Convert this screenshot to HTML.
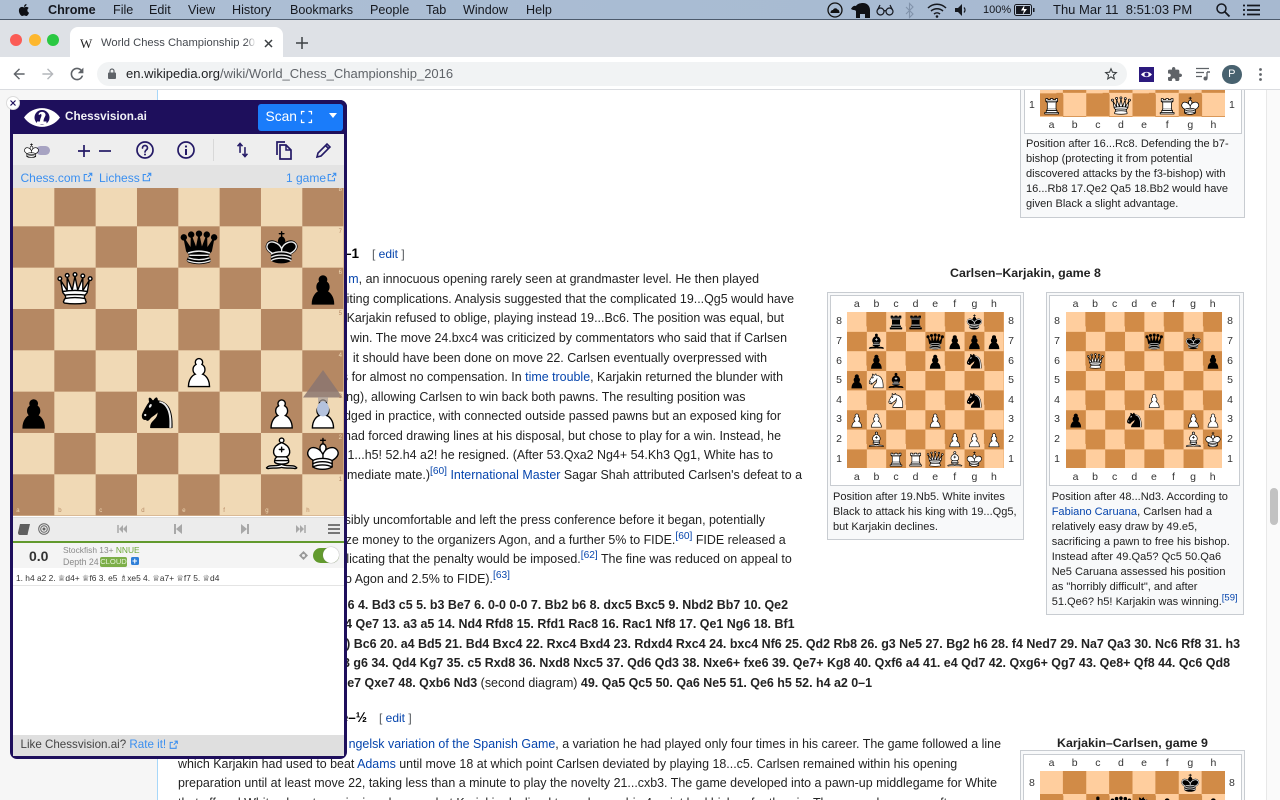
<!DOCTYPE html>
<html lang="en">
<head>
<meta charset="utf-8">
<title>World Chess Championship 2016</title>
<style>
html,body{margin:0;padding:0;width:1280px;height:800px;overflow:hidden;background:#fff;font-family:"Liberation Sans",Arial,sans-serif;color:#222}
#w{position:absolute;left:0;top:0;width:1280px;height:800px;overflow:hidden;background:#fff;filter:blur(.3px)}
.a{position:absolute}
.t{position:absolute;white-space:nowrap;line-height:16px}
.p{font-size:12.45px;color:#222}
.p a,.c a{color:#0645ad;text-decoration:none}
.p sup{font-size:10.2px;line-height:0;color:#0645ad}
.b{font-weight:bold}
.b span{font-weight:normal}
.c{font-size:11.05px;color:#222}
.m{font-size:12.6px;color:#15181f;line-height:20px;top:0}
.fl{position:absolute;display:flex;font-size:10.5px;color:#333;line-height:14px;text-align:center}
.fl i{font-style:normal;flex:1}
.col{flex-direction:column;width:14px}
.col i{display:flex;align-items:center;justify-content:center}
.wb{position:absolute;background:repeating-conic-gradient(#d18b47 0 25%,#ffce9e 0 50%)}
.cap{position:absolute;background:#f8f9fa;border:1px solid #c8ccd1;box-sizing:border-box}
.inner{position:absolute;background:#fff;border:1px solid #c8ccd1;box-sizing:border-box}
.nv{fill:none;stroke:#241a66;stroke-width:2;stroke-linecap:round;stroke-linejoin:round}
.lk{color:#3a8ff0;font-size:12px}
svg{position:absolute;overflow:visible}
.co{position:absolute;font-size:6px;line-height:7px}
</style>
</head>
<body>
<div id="w">
<svg width="0" height="0" style="position:absolute">
<defs>
<symbol id="wp" viewBox="0 0 45 45"><path d="M22.5 9c-2.21 0-4 1.79-4 4 0 .89.29 1.71.78 2.38C17.33 16.5 16 18.59 16 21c0 2.03.94 3.84 2.41 5.03-3 1.06-7.41 5.55-7.41 13.47h23c0-7.92-4.41-12.41-7.41-13.47 1.47-1.19 2.41-3 2.41-5.03 0-2.41-1.33-4.5-3.28-5.62.49-.67.78-1.49.78-2.38 0-2.21-1.79-4-4-4z" fill="#fff" stroke="#000" stroke-width="1.5" stroke-linecap="round"/></symbol>
<symbol id="bp" viewBox="0 0 45 45"><path d="M22.5 9c-2.21 0-4 1.79-4 4 0 .89.29 1.71.78 2.38C17.33 16.5 16 18.59 16 21c0 2.03.94 3.84 2.41 5.03-3 1.06-7.41 5.55-7.41 13.47h23c0-7.92-4.41-12.41-7.41-13.47 1.47-1.19 2.41-3 2.41-5.03 0-2.41-1.33-4.5-3.28-5.62.49-.67.78-1.49.78-2.38 0-2.21-1.79-4-4-4z" fill="#000" stroke="#000" stroke-width="1.5" stroke-linecap="round"/></symbol>
<symbol id="wn" viewBox="0 0 45 45"><g fill="none" fill-rule="evenodd" stroke="#000" stroke-width="1.5" stroke-linecap="round" stroke-linejoin="round"><path d="M22 10c10.5 1 16.5 8 16 29H15c0-9 10-6.5 8-21" fill="#fff"/><path d="M24 18c.38 2.91-5.55 7.37-8 9-3 2-2.82 4.34-5 4-1.042-.94 1.41-3.04 0-3-1 0 .19 1.23-1 2-1 0-4.003 1-4-4 0-2 6-12 6-12s1.89-1.9 2-3.5c-.73-.994-.5-2-.5-3 1-1 3 2.5 3 2.5h2s.78-1.992 2.5-3c1 0 1 3 1 3" fill="#fff"/><path d="M9.5 25.5a.5.5 0 1 1-1 0 .5.5 0 1 1 1 0zm5.433-9.75a.5 1.5 30 1 1-.866-.5.5 1.5 30 1 1 .866.5z" fill="#000"/></g></symbol>
<symbol id="bn" viewBox="0 0 45 45"><g fill="none" fill-rule="evenodd" stroke="#000" stroke-width="1.5" stroke-linecap="round" stroke-linejoin="round"><path d="M22 10c10.5 1 16.5 8 16 29H15c0-9 10-6.5 8-21" fill="#000"/><path d="M24 18c.38 2.91-5.55 7.37-8 9-3 2-2.82 4.34-5 4-1.042-.94 1.41-3.04 0-3-1 0 .19 1.23-1 2-1 0-4.003 1-4-4 0-2 6-12 6-12s1.89-1.9 2-3.5c-.73-.994-.5-2-.5-3 1-1 3 2.5 3 2.5h2s.78-1.992 2.5-3c1 0 1 3 1 3" fill="#000"/><path d="M9.5 25.5a.5.5 0 1 1-1 0 .5.5 0 1 1 1 0zm5.433-9.75a.5 1.5 30 1 1-.866-.5.5 1.5 30 1 1 .866.5z" fill="#ececec" stroke="#ececec"/><path d="M24.55 10.4l-.45 1.45.5.15c3.15 1 5.65 2.49 7.9 6.75S35.75 29.06 35.25 39l-.05.5h2.25l.05-.5c.5-10.06-.88-16.85-3.25-21.34-2.37-4.49-5.79-6.64-9.19-7.16l-.51-.1z" fill="#ececec" stroke="none"/></g></symbol>
<symbol id="wb" viewBox="0 0 45 45"><g fill="none" fill-rule="evenodd" stroke="#000" stroke-width="1.5" stroke-linecap="round" stroke-linejoin="round"><g fill="#fff"><path d="M9 36c3.39-.97 10.11.43 13.5-2 3.39 2.43 10.11 1.03 13.5 2 0 0 1.65.54 3 2-.68.97-1.65.99-3 .5-3.39-.97-10.11.46-13.5-1-3.39 1.46-10.11.03-13.5 1-1.35.49-2.32.47-3-.5 1.35-1.46 3-2 3-2z"/><path d="M15 32c2.5 2.5 12.5 2.5 15 0 .5-1.5 0-2 0-2 0-2.5-2.5-4-2.5-4 5.5-1.5 6-11.5-5-15.5-11 4-10.5 14-5 15.5 0 0-2.5 1.5-2.5 4 0 0-.5.5 0 2z"/><path d="M25 8a2.5 2.5 0 1 1-5 0 2.5 2.5 0 1 1 5 0z"/></g><path d="M17.5 26h10M15 30h15m-7.5-14.5v5M20 18h5"/></g></symbol>
<symbol id="bb" viewBox="0 0 45 45"><g fill="none" fill-rule="evenodd" stroke="#000" stroke-width="1.5" stroke-linecap="round" stroke-linejoin="round"><g fill="#000"><path d="M9 36c3.39-.97 10.11.43 13.5-2 3.39 2.43 10.11 1.03 13.5 2 0 0 1.65.54 3 2-.68.97-1.65.99-3 .5-3.39-.97-10.11.46-13.5-1-3.39 1.46-10.11.03-13.5 1-1.35.49-2.32.47-3-.5 1.35-1.46 3-2 3-2z"/><path d="M15 32c2.5 2.5 12.5 2.5 15 0 .5-1.5 0-2 0-2 0-2.5-2.5-4-2.5-4 5.5-1.5 6-11.5-5-15.5-11 4-10.5 14-5 15.5 0 0-2.5 1.5-2.5 4 0 0-.5.5 0 2z"/><path d="M25 8a2.5 2.5 0 1 1-5 0 2.5 2.5 0 1 1 5 0z"/></g><path d="M17.5 26h10M15 30h15m-7.5-14.5v5M20 18h5" stroke="#ececec"/></g></symbol>
<symbol id="wr" viewBox="0 0 45 45"><g fill="#fff" fill-rule="evenodd" stroke="#000" stroke-width="1.5" stroke-linecap="round" stroke-linejoin="round"><path d="M9 39h27v-3H9v3zM12 36v-4h21v4H12zM11 14V9h4v2h5V9h5v2h5V9h4v5"/><path d="M34 14l-3 3H14l-3-3"/><path d="M31 17v12.5H14V17"/><path d="M31 29.5l1.5 2.5h-20l1.5-2.5"/><path d="M11 14h23" fill="none"/></g></symbol>
<symbol id="br" viewBox="0 0 45 45"><g fill="#000" fill-rule="evenodd" stroke="#000" stroke-width="1.5" stroke-linecap="round" stroke-linejoin="round"><path d="M9 39h27v-3H9v3zM12.5 32l1.5-2.5h17l1.5 2.5h-20zM12 36v-4h21v4H12z"/><path d="M14 29.5v-13h17v13H14z"/><path d="M14 16.5L11 14h23l-3 2.5H14zM11 14V9h4v2h5V9h5v2h5V9h4v5H11z"/><path d="M12 35.5h21M13 31.5h19M14 29.5h17M14 16.5h17M11 14h23" fill="none" stroke="#ececec" stroke-width="1"/></g></symbol>
<symbol id="wq" viewBox="0 0 45 45"><g fill="#fff" fill-rule="evenodd" stroke="#000" stroke-width="1.5" stroke-linecap="round" stroke-linejoin="round"><path d="M8 12a2 2 0 1 1-4 0 2 2 0 1 1 4 0zM24.5 7.5a2 2 0 1 1-4 0 2 2 0 1 1 4 0zM41 12a2 2 0 1 1-4 0 2 2 0 1 1 4 0zM16 8.5a2 2 0 1 1-4 0 2 2 0 1 1 4 0zM33 9a2 2 0 1 1-4 0 2 2 0 1 1 4 0z"/><path d="M9 26c8.5-1.5 21-1.5 27 0l2-12-7 11V11l-5.5 13.5-3-15-3 15-5.5-14V25L7 14l2 12z"/><path d="M9 26c0 2 1.5 2 2.5 4 1 1.5 1 1 .5 3.5-1.5 1-1.5 2.5-1.5 2.5-1.5 1.5.5 2.5.5 2.5 6.5 1 16.5 1 23 0 0 0 1.5-1 0-2.5 0 0 .5-1.5-1-2.5-.5-2.5-.5-2 .5-3.5 1-2 2.5-2 2.5-4-8.5-1.5-18.5-1.5-27 0z"/><path d="M11.5 30c3.5-1 18.5-1 22 0M12 33.5c6-1 15-1 21 0" fill="none"/></g></symbol>
<symbol id="bq" viewBox="0 0 45 45"><g fill="#000" fill-rule="evenodd" stroke="#000" stroke-width="1.5" stroke-linecap="round" stroke-linejoin="round"><circle cx="6" cy="12" r="2.75"/><circle cx="14" cy="9" r="2.75"/><circle cx="22.5" cy="8" r="2.75"/><circle cx="31" cy="9" r="2.75"/><circle cx="39" cy="12" r="2.75"/><path d="M9 26c8.5-1.5 21-1.5 27 0l2.5-12.5L31 25l-.3-14.1-5.2 13.6-3-14.5-3 14.5-5.2-13.6L14 25 6.5 13.5 9 26z"/><path d="M9 26c0 2 1.5 2 2.5 4 1 1.5 1 1 .5 3.5-1.5 1-1.5 2.5-1.5 2.5-1.5 1.5.5 2.5.5 2.5 6.5 1 16.5 1 23 0 0 0 1.5-1 0-2.5 0 0 .5-1.5-1-2.5-.5-2.5-.5-2 .5-3.5 1-2 2.5-2 2.5-4-8.5-1.5-18.5-1.5-27 0z"/><path d="M11 38.5a35 35 1 0 0 23 0" fill="none"/><path d="M11 29a35 35 1 0 1 23 0M12.5 31.5h20M11.5 34.5a35 35 1 0 0 22 0M10.5 37.5a35 35 1 0 0 24 0" fill="none" stroke="#ececec"/></g></symbol>
<symbol id="wk" viewBox="0 0 45 45"><g fill="none" fill-rule="evenodd" stroke="#000" stroke-width="1.5" stroke-linecap="round" stroke-linejoin="round"><path d="M22.5 11.63V6M20 8h5"/><path d="M22.5 25s4.5-7.5 3-10.5c0 0-1-2.5-3-2.5s-3 2.5-3 2.5c-1.5 3 3 10.5 3 10.5" fill="#fff"/><path d="M11.5 37c5.5 3.5 15.5 3.5 21 0v-7s9-4.5 6-10.5c-4-6.5-13.5-3.5-16 4V27v-3.5c-3.5-7.5-13-10.5-16-4-3 6 5 10 5 10V37z" fill="#fff"/><path d="M11.5 30c5.5-3 15.5-3 21 0m-21 3.5c5.5-3 15.5-3 21 0m-21 3.5c5.5-3 15.5-3 21 0"/></g></symbol>
<symbol id="bk" viewBox="0 0 45 45"><g fill="none" fill-rule="evenodd" stroke="#000" stroke-width="1.5" stroke-linecap="round" stroke-linejoin="round"><path d="M22.5 11.63V6M20 8h5"/><path d="M22.5 25s4.5-7.5 3-10.5c0 0-1-2.5-3-2.5s-3 2.5-3 2.5c-1.5 3 3 10.5 3 10.5" fill="#000"/><path d="M11.5 37c5.5 3.5 15.5 3.5 21 0v-7s9-4.5 6-10.5c-4-6.5-13.5-3.5-16 4V27v-3.5c-3.5-7.5-13-10.5-16-4-3 6 5 10 5 10V37z" fill="#000"/><path d="M32 29.5s8.5-4 6.03-9.65C34.15 14 25 18 22.5 24.5l.01 2.1-.01-2.1C20 18 9.906 14 6.997 19.85c-2.497 5.65 4.853 9 4.853 9" stroke="#ececec"/><path d="M11.5 30c5.5-3 15.5-3 21 0m-21 3.5c5.5-3 15.5-3 21 0m-21 3.5c5.5-3 15.5-3 21 0" stroke="#ececec"/></g></symbol>
<symbol id="ext" viewBox="0 0 24 24"><path d="M14 3h7v7M21 3l-9 9M18 14v7H3V6h7" fill="none" stroke="currentColor" stroke-width="2.6"/></symbol>
</defs>
</svg>

<!-- page background -->
<div class="a" style="left:0;top:90px;width:157px;height:710px;background:#f6f6f6"></div>
<div class="a" style="left:157px;top:90px;width:1px;height:710px;background:#a7d7f9"></div>

<!-- article -->
<div class="t b p" style="right:921px;top:246px;font-size:13.5px;color:#000">–1</div>
<div class="t" style="left:372px;top:246px;font-size:12px;color:#54595d">[ <a style="color:#0645ad">edit</a> ]</div>

<div class="t p" style="right:521px;top:271.3px"><a>m</a>, an innocuous opening rarely seen at grandmaster level. He then played</div>
<div class="t p" style="right:486px;top:290.9px">iting complications. Analysis suggested that the complicated 19...Qg5 would have</div>
<div class="t p" style="right:496px;top:310.4px">Karjakin refused to oblige, playing instead 19...Bc6. The position was equal, but</div>
<div class="t p" style="right:493px;top:330px">win. The move 24.bxc4 was criticized by commentators who said that if Carlsen</div>
<div class="t p" style="right:513px;top:349.5px">it should have been done on move 22. Carlsen eventually overpressed with</div>
<div class="t p" style="right:497px;top:369.1px">s for almost no compensation. In <a>time trouble</a>, Karjakin returned the blunder with</div>
<div class="t p" style="right:534.5px;top:388.6px">ng), allowing Carlsen to win back both pawns. The resulting position was</div>
<div class="t p" style="right:499px;top:408.2px">dged in practice, with connected outside passed pawns but an exposed king for</div>
<div class="t p" style="right:499px;top:427.7px">had forced drawing lines at his disposal, but chose to play for a win. Instead, he</div>
<div class="t p" style="right:507px;top:447.3px">1...h5! 52.h4 a2! he resigned. (After 53.Qxa2 Ng4+ 54.Kh3 Qg1, White has to</div>
<div class="t p" style="right:478px;top:466.8px">mediate mate.)<sup>[60]</sup> <a>International Master</a> Sagar Shah attributed Carlsen's defeat to a</div>

<div class="t p" style="right:515px;top:512px">sibly uncomfortable and left the press conference before it began, potentially</div>
<div class="t p" style="right:494.3px;top:531.7px">ze money to the organizers Agon, and a further 5% to FIDE.<sup>[60]</sup> FIDE released a</div>
<div class="t p" style="right:488.2px;top:551.2px">licating that the penalty would be imposed.<sup>[62]</sup> The fine was reduced on appeal to</div>
<div class="t p" style="right:770px;top:570.8px">o Agon and 2.5% to FIDE).<sup>[63]</sup></div>

<div class="t p b" style="right:492px;top:596.7px">6 4. Bd3 c5 5. b3 Be7 6. 0-0 0-0 7. Bb2 b6 8. dxc5 Bxc5 9. Nbd2 Bb7 10. Qe2</div>
<div class="t p b" style="right:485.5px;top:616.2px">4 Qe7 13. a3 a5 14. Nd4 Rfd8 15. Rfd1 Rac8 16. Rac1 Nf8 17. Qe1 Ng6 18. Bf1</div>
<div class="t p b" style="right:40px;top:635.8px">) Bc6 20. a4 Bd5 21. Bd4 Bxc4 22. Rxc4 Bxd4 23. Rdxd4 Rxc4 24. bxc4 Nf6 25. Qd2 Rb8 26. g3 Ne5 27. Bg2 h6 28. f4 Ned7 29. Na7 Qa3 30. Nc6 Rf8 31. h3</div>
<div class="t p b" style="right:50px;top:655.3px">3 g6 34. Qd4 Kg7 35. c5 Rxd8 36. Nxd8 Nxc5 37. Qd6 Qd3 38. Nxe6+ fxe6 39. Qe7+ Kg8 40. Qxf6 a4 41. e4 Qd7 42. Qxg6+ Qg7 43. Qe8+ Qf8 44. Qc6 Qd8</div>
<div class="t p b" style="right:408px;top:674.9px">e7 Qxe7 48. Qxb6 Nd3 <span>(second diagram)</span> 49. Qa5 Qc5 50. Qa6 Ne5 51. Qe6 h5 52. h4 a2 0–1</div>

<div class="t b p" style="right:913px;top:710px;font-size:13.5px;color:#000">e–½</div>
<div class="t" style="left:379px;top:710px;font-size:12px;color:#54595d">[ <a style="color:#0645ad">edit</a> ]</div>

<div class="t p" style="right:279px;top:736px"><a>ngelsk variation of the Spanish Game</a>, a variation he had played only four times in his career. The game followed a line</div>
<div class="t p" style="left:178px;top:755.6px">which Karjakin had used to beat <a>Adams</a> until move 18 at which point Carlsen deviated by playing 18...c5. Carlsen remained within his opening</div>
<div class="t p" style="left:178px;top:775.2px">preparation until at least move 22, taking less than a minute to play the novelty 21...cxb3. The game developed into a pawn-up middlegame for White</div>
<div class="t p" style="left:178px;top:794.8px">that offered White almost no winning chances, but Karjakin declined to exchange his 4-point bad bishop for the pin. The game drew soon after.</div>

<!-- top right thumb -->
<div class="cap" style="left:1020px;top:80px;width:225px;height:137.5px"></div>
<div class="inner" style="left:1023.5px;top:80px;width:218px;height:53.5px"></div>
<div class="wb" style="left:1040px;top:70.4px;width:185px;height:46.2px;background-size:46.25px 46.2px"></div>
<svg style="left:1040px;top:93.5px" width="185" height="23.1" viewBox="0 0 8 1"><use href="#wr" x="0" y="0" width="1" height="1"/><use href="#wq" x="3" y="0" width="1" height="1"/><use href="#wr" x="5" y="0" width="1" height="1"/><use href="#wk" x="6" y="0" width="1" height="1"/></svg>
<div class="fl" style="left:1040px;top:118px;width:185px"><i>a</i><i>b</i><i>c</i><i>d</i><i>e</i><i>f</i><i>g</i><i>h</i></div>
<div class="t" style="left:1029px;top:97px;font-size:10.5px;color:#333">1</div>
<div class="t" style="left:1229px;top:97px;font-size:10.5px;color:#333">1</div>
<div class="t c" style="left:1026px;top:136px">Position after 16...Rc8. Defending the b7-</div>
<div class="t c" style="left:1026px;top:151px">bishop (protecting it from potential</div>
<div class="t c" style="left:1026px;top:166px">discovered attacks by the f3-bishop) with</div>
<div class="t c" style="left:1026px;top:181px">16...Rb8 17.Qe2 Qa5 18.Bb2 would have</div>
<div class="t c" style="left:1026px;top:196px">given Black a slight advantage.</div>

<!-- Carlsen-Karjakin, game 8 -->
<div class="t b" style="left:950px;top:265px;font-size:12.4px;color:#222">Carlsen–Karjakin, game 8</div>

<div class="cap" style="left:826.7px;top:291.7px;width:197px;height:248px"></div>
<div class="inner" style="left:830px;top:295px;width:190.5px;height:190.5px"></div>
<div class="wb" style="left:847px;top:311.7px;width:156.8px;height:156.8px;background-size:39.2px 39.2px"></div>
<svg style="left:847px;top:311.7px" width="156.8" height="156.8" viewBox="0 0 8 8">
<use href="#br" x="2" y="0" width="1" height="1"/><use href="#br" x="3" y="0" width="1" height="1"/><use href="#bk" x="6" y="0" width="1" height="1"/>
<use href="#bb" x="1" y="1" width="1" height="1"/><use href="#bq" x="4" y="1" width="1" height="1"/><use href="#bp" x="5" y="1" width="1" height="1"/><use href="#bp" x="6" y="1" width="1" height="1"/><use href="#bp" x="7" y="1" width="1" height="1"/>
<use href="#bp" x="1" y="2" width="1" height="1"/><use href="#bp" x="4" y="2" width="1" height="1"/><use href="#bn" x="6" y="2" width="1" height="1"/>
<use href="#bp" x="0" y="3" width="1" height="1"/><use href="#wn" x="1" y="3" width="1" height="1"/><use href="#bb" x="2" y="3" width="1" height="1"/>
<use href="#wn" x="2" y="4" width="1" height="1"/><use href="#bn" x="6" y="4" width="1" height="1"/>
<use href="#wp" x="0" y="5" width="1" height="1"/><use href="#wp" x="1" y="5" width="1" height="1"/><use href="#wp" x="4" y="5" width="1" height="1"/>
<use href="#wb" x="1" y="6" width="1" height="1"/><use href="#wp" x="5" y="6" width="1" height="1"/><use href="#wp" x="6" y="6" width="1" height="1"/><use href="#wp" x="7" y="6" width="1" height="1"/>
<use href="#wr" x="2" y="7" width="1" height="1"/><use href="#wr" x="3" y="7" width="1" height="1"/><use href="#wq" x="4" y="7" width="1" height="1"/><use href="#wb" x="5" y="7" width="1" height="1"/><use href="#wk" x="6" y="7" width="1" height="1"/>
</svg>
<div class="fl" style="left:847px;top:297px;width:156.8px"><i>a</i><i>b</i><i>c</i><i>d</i><i>e</i><i>f</i><i>g</i><i>h</i></div>
<div class="fl" style="left:847px;top:470px;width:156.8px"><i>a</i><i>b</i><i>c</i><i>d</i><i>e</i><i>f</i><i>g</i><i>h</i></div>
<div class="fl col" style="left:832px;top:311.7px;height:156.8px"><i>8</i><i>7</i><i>6</i><i>5</i><i>4</i><i>3</i><i>2</i><i>1</i></div>
<div class="fl col" style="left:1004px;top:311.7px;height:156.8px"><i>8</i><i>7</i><i>6</i><i>5</i><i>4</i><i>3</i><i>2</i><i>1</i></div>
<div class="t c" style="left:833px;top:488.5px">Position after 19.Nb5. White invites</div>
<div class="t c" style="left:833px;top:503.5px">Black to attack his king with 19...Qg5,</div>
<div class="t c" style="left:833px;top:518.5px">but Karjakin declines.</div>

<div class="cap" style="left:1045.5px;top:291.7px;width:198px;height:323.5px"></div>
<div class="inner" style="left:1049px;top:295px;width:190.5px;height:190.5px"></div>
<div class="wb" style="left:1065.7px;top:311.7px;width:156.8px;height:156.8px;background-size:39.2px 39.2px"></div>
<svg style="left:1065.7px;top:311.7px" width="156.8" height="156.8" viewBox="0 0 8 8">
<use href="#bq" x="4" y="1" width="1" height="1"/><use href="#bk" x="6" y="1" width="1" height="1"/>
<use href="#wq" x="1" y="2" width="1" height="1"/><use href="#bp" x="7" y="2" width="1" height="1"/>
<use href="#wp" x="4" y="4" width="1" height="1"/>
<use href="#bp" x="0" y="5" width="1" height="1"/><use href="#bn" x="3" y="5" width="1" height="1"/><use href="#wp" x="6" y="5" width="1" height="1"/><use href="#wp" x="7" y="5" width="1" height="1"/>
<use href="#wb" x="6" y="6" width="1" height="1"/><use href="#wk" x="7" y="6" width="1" height="1"/>
</svg>
<div class="fl" style="left:1065.7px;top:297px;width:156.8px"><i>a</i><i>b</i><i>c</i><i>d</i><i>e</i><i>f</i><i>g</i><i>h</i></div>
<div class="fl" style="left:1065.7px;top:470px;width:156.8px"><i>a</i><i>b</i><i>c</i><i>d</i><i>e</i><i>f</i><i>g</i><i>h</i></div>
<div class="fl col" style="left:1050px;top:311.7px;height:156.8px"><i>8</i><i>7</i><i>6</i><i>5</i><i>4</i><i>3</i><i>2</i><i>1</i></div>
<div class="fl col" style="left:1223px;top:311.7px;height:156.8px"><i>8</i><i>7</i><i>6</i><i>5</i><i>4</i><i>3</i><i>2</i><i>1</i></div>
<div class="t c" style="left:1051.7px;top:488.5px">Position after 48...Nd3. According to</div>
<div class="t c" style="left:1051.7px;top:503.5px"><a>Fabiano Caruana</a>, Carlsen had a</div>
<div class="t c" style="left:1051.7px;top:518.5px">relatively easy draw by 49.e5,</div>
<div class="t c" style="left:1051.7px;top:533.5px">sacrificing a pawn to free his bishop.</div>
<div class="t c" style="left:1051.7px;top:548.5px">Instead after 49.Qa5? Qc5 50.Qa6</div>
<div class="t c" style="left:1051.7px;top:563.5px">Ne5 Caruana assessed his position</div>
<div class="t c" style="left:1051.7px;top:578.5px">as "horribly difficult", and after</div>
<div class="t c" style="left:1051.7px;top:593.5px">51.Qe6? h5! Karjakin was winning.<sup style="font-size:9.5px;line-height:0;color:#0645ad">[59]</sup></div>

<!-- Karjakin-Carlsen, game 9 -->
<div class="t b" style="left:1057px;top:735px;font-size:12.4px;color:#222">Karjakin–Carlsen, game 9</div>
<div class="cap" style="left:1019.5px;top:750px;width:225.5px;height:80px"></div>
<div class="inner" style="left:1023px;top:753.5px;width:219px;height:80px"></div>
<div class="wb" style="left:1040px;top:770.7px;width:185px;height:46.2px;background-size:46.25px 46.2px"></div>
<svg style="left:1040px;top:770.7px" width="185" height="46.2" viewBox="0 0 8 2">
<use href="#bk" x="6" y="0" width="1" height="1"/><use href="#bb" x="2" y="1" width="1" height="1"/><use href="#bq" x="3" y="1" width="1" height="1"/><use href="#bn" x="4" y="1" width="1" height="1"/><use href="#bp" x="5" y="1" width="1" height="1"/><use href="#bp" x="7" y="1" width="1" height="1"/>
</svg>
<div class="fl" style="left:1040px;top:756px;width:185px"><i>a</i><i>b</i><i>c</i><i>d</i><i>e</i><i>f</i><i>g</i><i>h</i></div>
<div class="t" style="left:1029px;top:775px;font-size:10.5px;color:#333">8</div>
<div class="t" style="left:1229px;top:775px;font-size:10.5px;color:#333">8</div>

<!-- scrollbar -->
<div class="a" style="left:1266px;top:90px;width:14px;height:710px;background:#fafafa;border-left:1px solid #e8e8e8;box-sizing:border-box"></div>
<div class="a" style="left:1270px;top:488px;width:8px;height:37px;background:#c2c2c2;border-radius:4px"></div>

<!-- menu bar -->
<div class="a" style="left:0;top:0;width:1280px;height:20px;background:linear-gradient(90deg,#aebfd4,#a9bcd3 50%,#a7b9d0);border-bottom:1px solid #4c5a6c;box-sizing:border-box"></div>
<svg style="left:16px;top:2px" width="16" height="16" viewBox="0 0 24 24"><path fill="#0d0f14" d="M17.05 20.28c-.98.95-2.05.8-3.08.35-1.09-.46-2.09-.48-3.24 0-1.44.62-2.2.44-3.06-.35C2.79 15.25 3.51 7.59 9.05 7.31c1.35.07 2.29.74 3.08.8 1.18-.24 2.31-.93 3.57-.84 1.51.12 2.65.72 3.4 1.8-3.12 1.87-2.38 5.98.48 7.13-.57 1.5-1.31 2.99-2.54 4.09zM12.03 7.25c-.15-2.23 1.66-4.07 3.74-4.25.29 2.58-2.34 4.5-3.74 4.25z"/></svg>
<div class="t m b" style="left:48px;line-height:20px">Chrome</div>
<div class="t m" style="left:113px;line-height:20px">File</div>
<div class="t m" style="left:149px;line-height:20px">Edit</div>
<div class="t m" style="left:188px;line-height:20px">View</div>
<div class="t m" style="left:232px;line-height:20px">History</div>
<div class="t m" style="left:290px;line-height:20px">Bookmarks</div>
<div class="t m" style="left:370px;line-height:20px">People</div>
<div class="t m" style="left:426px;line-height:20px">Tab</div>
<div class="t m" style="left:463px;line-height:20px">Window</div>
<div class="t m" style="left:526px;line-height:20px">Help</div>
<!-- status icons -->
<svg style="left:827px;top:2px" width="16" height="16" viewBox="0 0 16 16"><circle cx="8" cy="8" r="7" fill="none" stroke="#111" stroke-width="1.3"/><path d="M3.5 11c0-2 1-3 2.5-3 .5-2 3.5-2.5 4.5-.5 1.5 0 2 2 2 3.5z" fill="#111"/></svg>
<svg style="left:851px;top:3px" width="19" height="15" viewBox="0 0 19 15"><path d="M0 6C1 4 3 2 5 3 6 1 9 0 12 0c4 0 7 3 7 7v8h-5v-4H9v4H5V8C4 7 3 7 2 7z" fill="#0f1115"/></svg>
<svg style="left:876px;top:4px" width="18" height="12" viewBox="0 0 18 12"><g fill="none" stroke="#15181f" stroke-width="1.2"><circle cx="4.5" cy="7.5" r="3.5"/><circle cx="13.5" cy="7.5" r="3.5"/><path d="M8 7c.7-.6 1.3-.6 2 0M1.5 6 4 1M16.5 6 14 1"/></g></svg>
<svg style="left:905px;top:3px" width="10" height="15" viewBox="0 0 10 15"><path d="M1 4l7 7-3.5 3.5v-14L8 4 1 11" fill="none" stroke="#8193aa" stroke-width="1.1"/></svg>
<svg style="left:927px;top:3px" width="20" height="15" viewBox="0 0 20 15"><g fill="none" stroke="#15181f" stroke-width="1.5"><path d="M1 5c5-5 13-5 18 0M4 8c3.5-3 8.5-3 12 0M7 11c1.8-1.5 4.2-1.5 6 0"/></g><circle cx="10" cy="13.5" r="1.3" fill="#15181f"/></svg>
<svg style="left:955px;top:4px" width="13" height="12" viewBox="0 0 13 12"><path d="M0 4h3l4-4v12L3 8H0z" fill="#15181f"/><path d="M9 3.5c1.3 1.5 1.3 3.5 0 5" fill="none" stroke="#15181f" stroke-width="1.3"/></svg>
<div class="t" style="left:983px;top:2px;font-size:11px;color:#15181f">100%</div>
<svg style="left:1014px;top:4px" width="21" height="12" viewBox="0 0 21 12"><rect x=".5" y=".5" width="17" height="11" rx="2" fill="#b9c7d9" stroke="#15181f"/><rect x="2" y="2" width="14" height="8" fill="#15181f"/><path d="M10.5 1 7 6.5h3L8.5 11 13 5h-3z" fill="#fff"/><rect x="19" y="4" width="1.5" height="4" fill="#15181f"/></svg>
<div class="t m" style="left:1053px;line-height:20px;font-size:13px;white-space:pre">Thu Mar 11  8:51:03 PM</div>
<svg style="left:1216px;top:3px" width="14" height="14" viewBox="0 0 14 14"><circle cx="5.5" cy="5.5" r="4.5" fill="none" stroke="#15181f" stroke-width="1.5"/><path d="M9 9l4.5 4.5" stroke="#15181f" stroke-width="1.8"/></svg>
<svg style="left:1243px;top:4px" width="17" height="12" viewBox="0 0 17 12"><path d="M4 1.5h13M4 6h13M4 10.5h13M0 1.5h2M0 6h2M0 10.5h2" stroke="#15181f" stroke-width="1.7"/></svg>

<!-- tab strip -->
<div class="a" style="left:0;top:20px;width:1280px;height:37px;background:#dee1e6"></div>
<div class="a" style="left:10px;top:34px;width:12px;height:12px;border-radius:50%;background:#fb5c56"></div>
<div class="a" style="left:29px;top:34px;width:12px;height:12px;border-radius:50%;background:#fdb72e"></div>
<div class="a" style="left:46.5px;top:34px;width:12px;height:12px;border-radius:50%;background:#2ac842"></div>
<div class="a" style="left:69.5px;top:27px;width:213px;height:30px;background:#fff;border-radius:8px 8px 0 0"></div>
<div class="t" style="left:80px;top:36px;font-family:'Liberation Serif',serif;font-size:13px;color:#222">W</div>
<div class="a" style="left:101px;top:35px;width:155px;height:16px;overflow:hidden;font-size:11.2px;line-height:16px;white-space:nowrap;color:#45494f">World Chess Championship 2016</div>
<div class="a" style="left:246px;top:34px;width:10px;height:16px;background:linear-gradient(90deg,rgba(255,255,255,0),#fff)"></div>
<svg style="left:264px;top:39px" width="9" height="9" viewBox="0 0 9 9"><path d="M1 1l7 7M8 1L1 8" stroke="#3c4043" stroke-width="1.5"/></svg>
<svg style="left:296px;top:37px" width="12" height="12" viewBox="0 0 12 12"><path d="M6 0v12M0 6h12" stroke="#3c4043" stroke-width="1.5"/></svg>

<!-- toolbar -->
<div class="a" style="left:0;top:57px;width:1280px;height:33px;background:#fff;border-bottom:1px solid #dadce0;box-sizing:border-box"></div>
<svg style="left:12px;top:67px" width="14" height="14" viewBox="2 2 20 20"><path fill="#5f6368" d="M20 11H7.83l5.59-5.59L12 4l-8 8 8 8 1.41-1.41L7.83 13H20v-2z"/></svg>
<svg style="left:41px;top:67px" width="14" height="14" viewBox="2 2 20 20"><path fill="#b4b7bb" transform="matrix(-1 0 0 1 24 0)" d="M20 11H7.83l5.59-5.59L12 4l-8 8 8 8 1.41-1.41L7.83 13H20v-2z"/></svg>
<svg style="left:69px;top:66px" width="16" height="16" viewBox="2 2 20 20"><path fill="#5f6368" d="M17.65 6.35A7.958 7.958 0 0012 4c-4.42 0-7.99 3.58-7.99 8s3.57 8 7.99 8c3.73 0 6.84-2.55 7.73-6h-2.08A5.99 5.99 0 0112 18c-3.31 0-6-2.69-6-6s2.69-6 6-6c1.66 0 3.14.69 4.22 1.78L13 11h7V4l-2.35 2.35z"/></svg>
<div class="a" style="left:96.5px;top:61.5px;width:1030px;height:24.5px;background:#f1f3f4;border-radius:13px"></div>
<svg style="left:108px;top:68px" width="8" height="11" viewBox="0 0 8 11"><path d="M2 5V3a2 2 0 0 1 4 0v2" fill="none" stroke="#5f6368" stroke-width="1.2"/><rect x="0" y="4.5" width="8" height="6.5" rx="1" fill="#5f6368"/></svg>
<div class="t" style="left:126px;top:66px;font-size:13px;color:#5f6368"><span style="color:#202124">en.wikipedia.org</span>/wiki/World_Chess_Championship_2016</div>
<svg style="left:1103px;top:66px" width="16" height="16" viewBox="0 0 24 24"><path fill="#3c4043" d="M22 9.24l-7.19-.62L12 2 9.19 8.63 2 9.24l5.46 4.73L5.82 21 12 17.27 18.18 21l-1.63-7.03L22 9.24zM12 15.4l-3.76 2.27 1-4.28-3.32-2.88 4.38-.38L12 6.1l1.71 4.04 4.38.38-3.32 2.88 1 4.28L12 15.4z"/></svg>
<div class="a" style="left:1139px;top:67px;width:15px;height:15px;background:#2c1a7e"></div>
<svg style="left:1141px;top:71px" width="11" height="7" viewBox="0 0 11 7"><path d="M0 3.5C3 0 8 0 11 3.5 8 7 3 7 0 3.5z" fill="#fff"/><circle cx="5.5" cy="3.5" r="2" fill="#2c1a7e"/></svg>
<svg style="left:1168px;top:67px" width="14" height="14" viewBox="2 1 21 21"><path fill="#5f6368" d="M20.5 11H19V7c0-1.1-.9-2-2-2h-4V3.5C13 2.12 11.88 1 10.5 1S8 2.12 8 3.5V5H4c-1.1 0-1.99.9-1.99 2v3.8H3.5c1.49 0 2.7 1.21 2.7 2.7s-1.21 2.7-2.7 2.7H2V20c0 1.1.9 2 2 2h3.8v-1.5c0-1.49 1.21-2.7 2.7-2.7 1.49 0 2.7 1.21 2.7 2.7V22H17c1.1 0 2-.9 2-2v-4h1.5c1.38 0 2.5-1.12 2.5-2.5S21.88 11 20.5 11z"/></svg>
<svg style="left:1196px;top:67px" width="15" height="14" viewBox="0 0 15 14"><path d="M0 1.5h13M0 5.5h8M0 9.5h6" stroke="#5f6368" stroke-width="1.3"/><path d="M11 5v6.5" stroke="#5f6368" stroke-width="1.3"/><circle cx="9.5" cy="11.5" r="2" fill="#5f6368"/><path d="M11 5h3" stroke="#5f6368" stroke-width="1.5"/></svg>
<div class="a" style="left:1222px;top:64.5px;width:19.5px;height:19.5px;border-radius:50%;background:#48626f;color:#fff;font-size:11px;line-height:19.5px;text-align:center">P</div>
<svg style="left:1259px;top:68px" width="3" height="13" viewBox="0 0 3 13"><circle cx="1.5" cy="1.5" r="1.4" fill="#5f6368"/><circle cx="1.5" cy="6.5" r="1.4" fill="#5f6368"/><circle cx="1.5" cy="11.5" r="1.4" fill="#5f6368"/></svg>

<!-- popup -->
<div class="a" style="left:10px;top:100px;width:337px;height:658.5px;box-sizing:border-box;border:3px solid #1e0f5c;border-radius:7px;background:#fff"></div>
<div class="a" style="left:10px;top:100px;width:337px;height:34px;background:#1e0f5c;border-radius:7px 7px 0 0"></div>
<div class="a" style="left:13px;top:134px;width:331px;height:31px;background:#eeeeee"></div>
<div class="a" style="left:13px;top:165px;width:331px;height:23px;background:#e3e3e3"></div>

<!-- logo -->
<svg style="left:24px;top:106.5px" width="36" height="21" viewBox="0 0 36 21"><path d="M0 10.5C9-2 27-2 36 10.5 27 23 9 23 0 10.5z" fill="#fff"/><circle cx="18" cy="10.5" r="7.5" fill="#1e0f5c"/><path d="M14.5 7.5c.5-3.500 6.500-3.500 7 0 .2 2-1.800 3-2 7h3v3h-9.500v-3h3c0-3 1.500-4.500 1.500-6.500 0-1.200-1.700-1.200-2 0z" fill="#fff"/></svg>
<div class="t b" style="left:65px;top:109px;font-size:11.7px;color:#f2f2f8">Chessvision.ai</div>
<div class="a" style="left:258px;top:103.5px;width:85px;height:27.5px;background:#1a7cfa;border-radius:3px"></div>
<div class="t" style="left:265.5px;top:109px;font-size:13.8px;color:#fff">Scan</div>
<svg style="left:301px;top:111px" width="11" height="12" viewBox="0 0 11 12"><path d="M.5 3.5V.5h3M7.5.5h3v3M.5 8.5v3h3M7.5 11.5h3v-3" fill="none" stroke="#fff" stroke-width="1.2"/></svg>
<svg style="left:329px;top:113px" width="8" height="5" viewBox="0 0 8 5"><path d="M0 0h8L4 5z" fill="#fff"/></svg>
<div class="a" style="left:6px;top:96px;width:14px;height:14px;box-sizing:border-box;border:1.5px solid #dcdcdc;background:#fff;border-radius:50%"></div>
<svg style="left:10px;top:100px" width="6" height="6" viewBox="0 0 6 6"><path d="M.5.5l5 5M5.5.5l-5 5" stroke="#1e0f5c" stroke-width="1.2"/></svg>

<!-- popup toolbar -->
<div class="a" style="left:36px;top:146px;width:14px;height:9px;border-radius:5px;background:#a7a3c2"></div>
<svg style="left:22px;top:141px" width="19" height="19" viewBox="0 0 45 45"><use href="#wk" width="45" height="45"/></svg>
<svg style="left:77px;top:144px" width="14" height="14" viewBox="0 0 14 14"><path d="M7 1v12M1 7h12" stroke="#241a66" stroke-width="1.7"/></svg>
<svg style="left:98px;top:144px" width="14" height="14" viewBox="0 0 14 14"><path d="M1 7h12" stroke="#241a66" stroke-width="1.7"/></svg>
<svg style="left:136px;top:141px" width="18" height="18" viewBox="0 0 18 18"><circle class="nv" cx="9" cy="9" r="8" style="stroke-width:1.7"/><path class="nv" style="stroke-width:1.7" d="M6.5 7c0-3.300 5-3.300 5 0 0 2-2.500 2-2.500 4"/><circle cx="9" cy="13.5" r="1" fill="#241a66"/></svg>
<svg style="left:177px;top:141px" width="18" height="18" viewBox="0 0 18 18"><circle class="nv" cx="9" cy="9" r="8" style="stroke-width:1.7"/><circle cx="9" cy="5.5" r="1.1" fill="#241a66"/><path d="M9 8v6" stroke="#241a66" stroke-width="2"/></svg>
<div class="a" style="left:213px;top:139px;width:1px;height:22px;background:#d8d8d8"></div>
<svg style="left:237px;top:143px" width="11" height="14" viewBox="0 0 13 17"><path d="M3.5 12V1M.5 4l3-3.500 3 3.500M9.500 5v11M6.500 13l3 3.500 3-3.500" fill="none" stroke="#241a66" stroke-width="1.9"/></svg>
<svg style="left:275px;top:141px" width="17" height="19" viewBox="0 0 17 19"><path d="M2 14V1h8M5 4h6l5 5v9H5z" fill="none" stroke="#241a66" stroke-width="1.7"/><path d="M11 4v5h5" fill="none" stroke="#241a66" stroke-width="1.5"/></svg>
<svg style="left:316px;top:142px" width="16" height="16" viewBox="0 0 16 16"><path d="M1 15l1-4L11 2l3 3-9 9zM9.500 3.500l3 3" fill="none" stroke="#241a66" stroke-width="1.6"/></svg>

<!-- links -->
<div class="t lk" style="left:20.5px;top:170px">Chess.com</div>
<svg style="left:83px;top:172px;color:#3a8ff0" width="10" height="10"><use href="#ext" width="10" height="10"/></svg>
<div class="t lk" style="left:99px;top:170px">Lichess</div>
<svg style="left:142px;top:172px;color:#3a8ff0" width="10" height="10"><use href="#ext" width="10" height="10"/></svg>
<div class="t lk" style="left:286px;top:170px">1 game</div>
<svg style="left:327px;top:172px;color:#3a8ff0" width="10" height="10"><use href="#ext" width="10" height="10"/></svg>

<!-- main board -->
<div class="a" style="left:13.3px;top:188px;width:330.7px;height:328.5px;overflow:hidden">
  <div class="a" style="left:0;top:-2.67px;width:330.64px;height:330.64px;background:repeating-conic-gradient(#b58863 0 25%,#f0d9b5 0 50%);background-size:82.66px 82.66px"></div>
  <svg style="left:0;top:-2.67px" width="330.64" height="330.64" viewBox="0 0 8 8">
    <use href="#bq" x="4" y="1" width="1" height="1"/><use href="#bk" x="6" y="1" width="1" height="1"/>
    <use href="#wq" x="1" y="2" width="1" height="1"/><use href="#bp" x="7" y="2" width="1" height="1"/>
    <use href="#wp" x="4" y="4" width="1" height="1"/>
    <use href="#bp" x="0" y="5" width="1" height="1"/><use href="#bn" x="3" y="5" width="1" height="1"/><use href="#wp" x="6" y="5" width="1" height="1"/><use href="#wp" x="7" y="5" width="1" height="1"/>
    <use href="#wb" x="6" y="6" width="1" height="1"/><use href="#wk" x="7" y="6" width="1" height="1"/>
  </svg>
  <svg style="left:0;top:0" width="331" height="329" viewBox="0 0 331 329">
    <path d="M310 182 L329.5 209.5 L290 209.5 Z" fill="#8b7670" opacity=".85"/>
    <rect x="305" y="209" width="10" height="5" fill="#a79c9a" opacity=".7"/>
    <ellipse cx="310" cy="221" rx="6" ry="7.5" fill="#b4c2dd"/>
  </svg>
  <span class="co" style="left:3px;top:320px;color:#f0d9b5">a</span><span class="co" style="left:45px;top:320px;color:#b58863">b</span><span class="co" style="left:86px;top:320px;color:#f0d9b5">c</span><span class="co" style="left:128px;top:320px;color:#b58863">d</span><span class="co" style="left:169px;top:320px;color:#f0d9b5">e</span><span class="co" style="left:210px;top:320px;color:#b58863">f</span><span class="co" style="left:252px;top:320px;color:#f0d9b5">g</span><span class="co" style="left:293px;top:320px;color:#b58863">h</span>
  <span class="co" style="right:2px;top:-1px;color:#f0d9b5">8</span><span class="co" style="right:2px;top:41px;color:#b58863">7</span><span class="co" style="right:2px;top:82px;color:#f0d9b5">6</span><span class="co" style="right:2px;top:123px;color:#b58863">5</span><span class="co" style="right:2px;top:165px;color:#f0d9b5">4</span><span class="co" style="right:2px;top:206px;color:#b58863">3</span><span class="co" style="right:2px;top:247px;color:#f0d9b5">2</span><span class="co" style="right:2px;top:289px;color:#b58863">1</span>
</div>

<!-- controls -->
<div class="a" style="left:13px;top:516.5px;width:331px;height:24.5px;background:#ececec;border-top:1px solid #ddd;box-sizing:border-box"></div>
<svg style="left:18px;top:523px" width="12" height="12" viewBox="0 0 12 12"><path d="M2 1h10l-2 8.500H0zM0 9.500c0 2 1 2.500 2 2.500h7.500l.5-2.500" fill="#5f5f5f"/></svg>
<svg style="left:38px;top:523px" width="12" height="12" viewBox="0 0 12 12"><circle cx="6" cy="6" r="5.3" fill="none" stroke="#666" stroke-width="1"/><circle cx="6" cy="6" r="3.3" fill="none" stroke="#666" stroke-width="1"/><circle cx="6" cy="6" r="1.5" fill="#666"/></svg>
<svg style="left:117px;top:525px" width="10" height="8" viewBox="0 0 10 8"><path d="M1 0v8" stroke="#a8a8a8" stroke-width="1.5"/><path d="M6 0v8L2 4zM10 0v8L6 4z" fill="#a8a8a8"/></svg>
<svg style="left:174px;top:524px" width="8" height="10" viewBox="0 0 8 10"><path d="M1 0v10" stroke="#a8a8a8" stroke-width="2"/><path d="M8 0v10L2 5z" fill="#a8a8a8"/></svg>
<svg style="left:241px;top:524px" width="8" height="10" viewBox="0 0 8 10"><path d="M7 0v10" stroke="#a8a8a8" stroke-width="2"/><path d="M0 0v10l6-5z" fill="#a8a8a8"/></svg>
<svg style="left:296px;top:525px" width="10" height="8" viewBox="0 0 10 8"><path d="M9 0v8" stroke="#a8a8a8" stroke-width="1.5"/><path d="M0 0v8l4-4zM4 0v8l4-4z" fill="#a8a8a8"/></svg>
<svg style="left:328px;top:524px" width="12" height="10" viewBox="0 0 12 10"><path d="M0 1h12M0 5h12M0 9h12" stroke="#4f4f4f" stroke-width="1.5"/></svg>
<div class="a" style="left:13px;top:541px;width:331px;height:2px;background:#629a2e"></div>
<div class="a" style="left:13px;top:543px;width:331px;height:25px;background:#f4f4f4"></div>
<div class="t b" style="left:29px;top:547.5px;font-size:14px;color:#333">0.0</div>
<div class="t" style="left:63px;top:541.5px;font-size:8.4px;color:#8a8a8a">Stockfish 13+ <span style="color:#6ea83a">NNUE</span></div>
<div class="t" style="left:63px;top:553.5px;font-size:8.8px;color:#8a8a8a">Depth 24</div>
<div class="a" style="left:100px;top:556.5px;width:27px;height:10px;background:#7cae48;border-radius:2px;color:#e5f2d8;font-size:7.6px;line-height:10px;text-align:center">CLOUD</div>
<div class="a" style="left:130.5px;top:556.5px;width:8.5px;height:8.5px;background:#2f7fd8;border-radius:1.5px;color:#fff;font-size:9px;font-weight:bold;line-height:8.5px;text-align:center">+</div>
<svg style="left:299px;top:551px" width="9" height="9" viewBox="0 0 9 9"><path d="M4.500 0L9 4.500 4.500 9 0 4.500z" fill="#9a9a9a"/><circle cx="4.500" cy="4.500" r="1.500" fill="#eee"/></svg>
<div class="a" style="left:312.5px;top:547.5px;width:26px;height:15px;border-radius:8px;background:#629a2e"></div>
<div class="a" style="left:323px;top:547px;width:16px;height:16px;border-radius:50%;background:#fff;box-shadow:0 0 1px #777"></div>
<div class="t" style="left:16px;top:569.5px;font-size:8.4px;color:#333;font-family:'Liberation Sans','DejaVu Sans',sans-serif">1. h4 a2 2. ♕d4+ ♕f6 3. e5 ♗xe5 4. ♕a7+ ♕f7 5. ♕d4</div>
<div class="a" style="left:13px;top:585px;width:331px;height:1px;background:#e4e4e4"></div>

<!-- footer -->
<div class="a" style="left:13px;top:734.5px;width:331px;height:21px;background:#dfdfdf"></div>
<div class="t" style="left:20.5px;top:737px;font-size:11.6px;color:#444">Like Chessvision.ai? <span style="color:#3a8ff0">Rate it!</span></div>
<svg style="left:169px;top:740px;color:#3a8ff0" width="9.5" height="9.5"><use href="#ext" width="9.5" height="9.5"/></svg>
</div>
</body>
</html>
